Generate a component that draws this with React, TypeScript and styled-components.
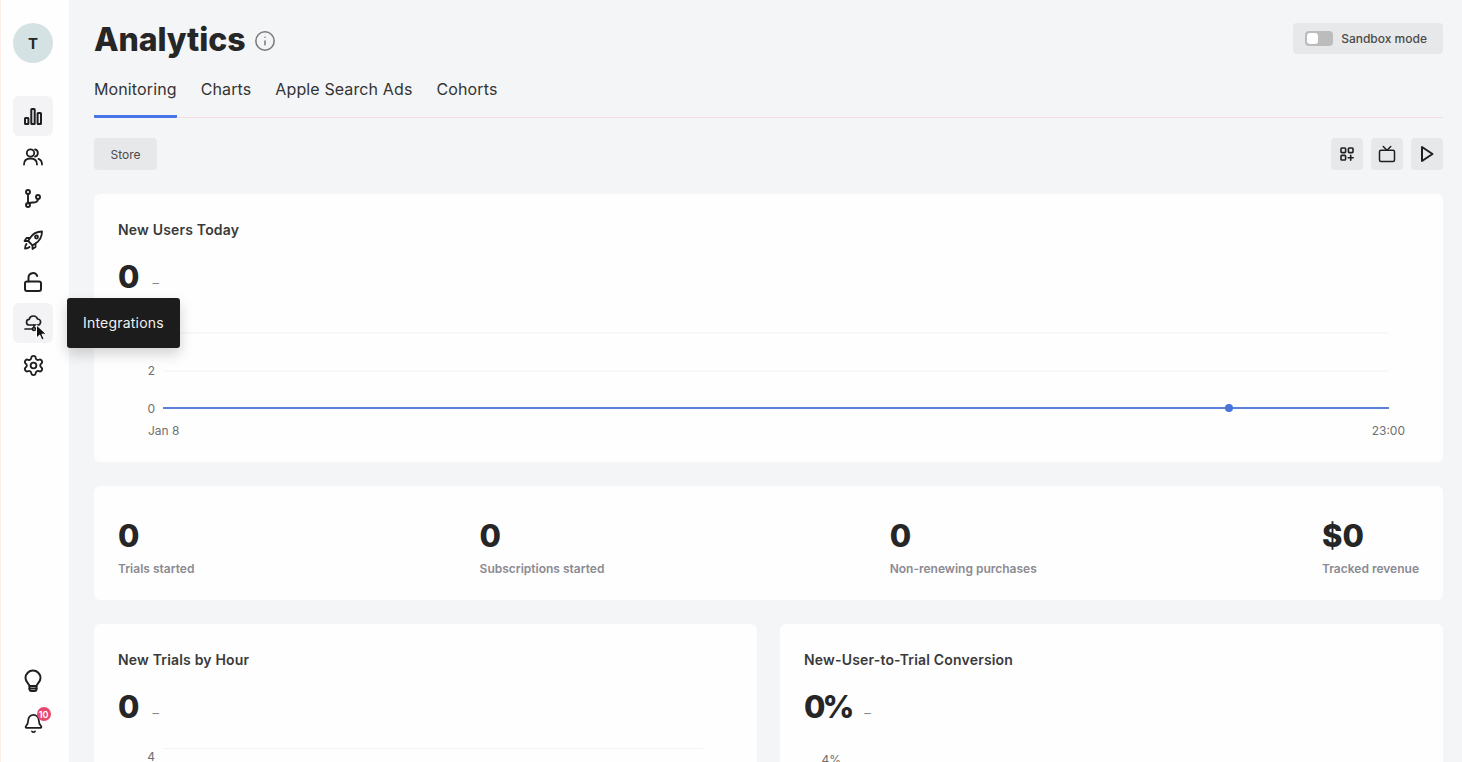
import React from 'react';
import styled, { createGlobalStyle } from 'styled-components';
import { Bell, Info, Settings, Tv } from 'lucide-react';

const BarsIcon = () => (
    <svg width="22" height="22" viewBox="0 0 22 22" fill="none" stroke="#1f1f1f" strokeWidth="2" strokeLinejoin="round">
        <rect x="3" y="13" width="3.4" height="6" rx="0.5" />
        <rect x="9.300" y="4" width="3.400" height="15" rx="0.5" />
        <rect x="15.600" y="8" width="3.400" height="11" rx="0.5" />
    </svg>
);

const UsersIcon = () => (
    <svg width="22" height="22" viewBox="0 0 22 22" fill="none" stroke="#1f1f1f" strokeWidth="1.8" strokeLinecap="round">
        <circle cx="8.500" cy="7" r="3.700" />
        <path d="M2 18.500c0-4 2.800-6 6.500-6s6.500 2 6.500 6" />
        <path d="M13 3.400a3.700 3.700 0 0 1 0 7.200" />
        <path d="M16.500 12.900c2.200.8 3.500 2.800 3.500 5.600" />
    </svg>
);

const BranchIcon = () => (
    <svg width="22" height="22" viewBox="0 0 22 22" fill="none" stroke="#1f1f1f" strokeWidth="1.9" strokeLinecap="round">
        <circle cx="6" cy="4" r="2" />
        <circle cx="6" cy="17" r="2" />
        <circle cx="16" cy="9" r="2" />
        <path d="M6 6v9" />
        <path d="M16 11c0 2.500-2 3.500-5 3.500-2.500 0-4 .5-5 1" />
    </svg>
);

const RocketIcon = () => (
    <svg width="22" height="22" viewBox="0 0 22 22" fill="none" stroke="#1f1f1f" strokeWidth="1.8" strokeLinecap="round" strokeLinejoin="round">
        <path d="M20 2.500C14.500 2.500 10.500 5 8 9l-1.800 3 4.300 4.300 3-1.800c3.800-2.500 6.500-6.500 6.500-12z" />
        <path d="M8 9H4.500l-2 3h3.700" />
        <path d="M13.500 14.500V18l-3 2v-3.700" />
        <circle cx="14.500" cy="8" r="1.500" />
        <path d="M4.500 15c-1 1-1.500 3-1.500 4.500 1.500 0 3.500-.5 4.500-1.500" />
    </svg>
);

const LockIcon = () => (
    <svg width="22" height="22" viewBox="0 0 22 22" fill="none" stroke="#1f1f1f" strokeWidth="2" strokeLinecap="round" strokeLinejoin="round">
        <rect x="3" y="10.500" width="16" height="9.500" rx="2" />
        <path d="M6.500 10.500V6.500a4.500 4.500 0 0 1 8.700-1.500" />
    </svg>
);

const CloudNodeIcon = () => (
    <svg width="22" height="22" viewBox="0 0 22 22" fill="none" stroke="#1f1f1f" strokeWidth="1.7" strokeLinecap="round" strokeLinejoin="round">
        <path d="M7.500 13a2.800 2.800 0 0 1-.3-5.600A4.300 4.300 0 0 1 15.500 7a3 3 0 0 1 .2 6z" />
        <path d="M12 13v2.500" />
        <circle cx="12" cy="17" r="1.500" />
        <path d="M3 17h7.500" />
    </svg>
);

const BulbIcon = () => (
    <svg width="24" height="24" viewBox="0 0 24 24" fill="none" stroke="#1f1f1f" strokeWidth="2" strokeLinecap="round" strokeLinejoin="round">
        <path d="M8.500 17C8.500 15 4.500 13.500 4.500 9a7.500 7.500 0 0 1 15 0c0 4.500-4 6-4 8z" />
        <path d="M8.500 17v3a2 2 0 0 0 2 2h3a2 2 0 0 0 2-2v-3" />
        <path d="M8.500 19.500h7" />
    </svg>
);

const GridPlusIcon = () => (
    <svg width="16" height="16" viewBox="0 0 16 16" fill="none" stroke="#1f1f1f" strokeWidth="1.6" strokeLinecap="round">
        <rect x="2" y="2" width="4.600" height="4.600" rx="0.8" />
        <rect x="9.400" y="2" width="4.600" height="4.600" rx="0.8" />
        <rect x="2" y="9.400" width="4.600" height="4.600" rx="0.8" />
        <path d="M11.700 9.200v5M9.200 11.700h5" />
    </svg>
);

const PlayIcon = () => (
    <svg width="18" height="18" viewBox="0 0 18 18" fill="none" stroke="#1f1f1f" strokeWidth="2" strokeLinejoin="round">
        <path d="M4 2l10.500 7L4 16z" />
    </svg>
);

const CursorIcon = () => (
    <svg width="14" height="18" viewBox="0 0 14 18">
        <path d="M1.500 1v13l3.200-3 2.200 5 2.200-1-2.200-4.800h4.400z" fill="#111" stroke="#fff" strokeWidth="1" />
    </svg>
);

const navItems = [
    { icon: <BarsIcon />, key: 'analytics', active: true },
    { icon: <UsersIcon />, key: 'users' },
    { icon: <BranchIcon />, key: 'flows' },
    { icon: <RocketIcon />, key: 'launch' },
    { icon: <LockIcon />, key: 'access' },
    { icon: <CloudNodeIcon />, key: 'integrations', active: true, tooltip: 'Integrations' },
    { icon: <Settings size={23} color="#1f1f1f" strokeWidth={1.9} />, key: 'settings' },
];

const tabs = ['Monitoring', 'Charts', 'Apple Search Ads', 'Cohorts'];

const stats = [
    { value: '0', label: 'Trials started' },
    { value: '0', label: 'Subscriptions started' },
    { value: '0', label: 'Non-renewing purchases' },
    { value: '$0', label: 'Tracked revenue' },
];

const UsersChart = () => (
    <ChartSvg width="1301" height="132" viewBox="0 0 1301 132">
        <line x1="45" y1="15" x2="1271" y2="15" stroke="#f1f2f5" />
        <line x1="45" y1="53" x2="1271" y2="53" stroke="#f1f2f5" />
        <ChartLabel x="37" y="57" textAnchor="end">2</ChartLabel>
        <ChartLabel x="37" y="94.500" textAnchor="end">0</ChartLabel>
        <line x1="45" y1="90" x2="1271" y2="90" stroke="#5b80d8" strokeWidth="2" />
        <circle cx="1111" cy="90" r="4" fill="#4775d9" />
        <ChartLabel x="30" y="116.500">Jan 8</ChartLabel>
        <ChartLabel x="1287" y="116.500" textAnchor="end">23:00</ChartLabel>
    </ChartSvg>
);

const App: React.FC = () => {
    return (
        <Page>
            <GlobalStyle />
            <Sidebar>
                <Avatar>T</Avatar>
                <Nav>
                    {navItems.map((item) => (
                        <NavItem key={item.key} $active={item.active}>
                            {item.icon}
                            {item.tooltip && (
                                <>
                                    <Cursor><CursorIcon /></Cursor>
                                    <Tooltip>{item.tooltip}</Tooltip>
                                </>
                            )}
                        </NavItem>
                    ))}
                </Nav>
                <SidebarBottom>
                    <BulbIcon />
                    <BellWrap>
                        <Bell size={21} color="#1f1f1f" />
                        <BellBadge>10</BellBadge>
                    </BellWrap>
                </SidebarBottom>
            </Sidebar>
            <Main>
                <Header>
                    <TitleRow>
                        <Title>Analytics</Title>
                        <InfoIcon size={22} color="#7b7b7b" strokeWidth={1.7} />
                    </TitleRow>
                    <SandboxButton>
                        <Toggle><ToggleKnob /></Toggle>
                        Sandbox mode
                    </SandboxButton>
                </Header>
                <TabBar>
                    {tabs.map((tab, index) => (
                        <Tab key={tab} $active={index === 0}>{tab}</Tab>
                    ))}
                </TabBar>
                <Toolbar>
                    <StoreButton>Store</StoreButton>
                    <ToolButtons>
                        <IconButton><GridPlusIcon /></IconButton>
                        <IconButton><Tv size={18} color="#1f1f1f" /></IconButton>
                        <IconButton><PlayIcon /></IconButton>
                    </ToolButtons>
                </Toolbar>
                <Card>
                    <CardTitle>New Users Today</CardTitle>
                    <ValueRow>
                        <BigValue>0</BigValue>
                        <Dash>–</Dash>
                    </ValueRow>
                    <UsersChart />
                </Card>
                <StatsCard>
                    {stats.map((stat) => (
                        <Stat key={stat.label}>
                            <BigValue>{stat.value}</BigValue>
                            <StatLabel>{stat.label}</StatLabel>
                        </Stat>
                    ))}
                </StatsCard>
                <TwoColumns>
                    <Card>
                        <CardTitle>New Trials by Hour</CardTitle>
                        <ValueRow>
                            <BigValue>0</BigValue>
                            <Dash>–</Dash>
                        </ValueRow>
                        <PartialAxis>
                            <AxisLabel>4</AxisLabel>
                            <AxisLine />
                        </PartialAxis>
                    </Card>
                    <Card>
                        <CardTitle>New-User-to-Trial Conversion</CardTitle>
                        <ValueRow>
                            <BigValue $tight>0%</BigValue>
                            <Dash>–</Dash>
                        </ValueRow>
                        <PartialAxis>
                            <AxisLabel $lower>4%</AxisLabel>
                        </PartialAxis>
                    </Card>
                </TwoColumns>
            </Main>
        </Page>
    );
};

export default App;

const GlobalStyle = createGlobalStyle`
    html, body {
        margin: 0;
        height: 100%;
        overflow: hidden;
    }
    body {
        font-family: Inter, "Liberation Sans", sans-serif;
        color: #262626;
    }
    * {
        box-sizing: border-box;
    }
`;

const Page = styled.div`
    display: flex;
    width: 1462px;
    height: 762px;
    overflow: hidden;
    background-color: #f4f5f6;
`;

const Sidebar = styled.aside`
    position: relative;
    z-index: 2;
    flex: 0 0 69px;
    display: flex;
    flex-direction: column;
    align-items: center;
    height: 762px;
    padding: 23px 3px 28px 0;
    background-color: #fefefe;
    box-shadow: inset 1px 0 0 #fdeee8;
`;

const Avatar = styled.div`
    flex: 0 0 40px;
    display: flex;
    align-items: center;
    justify-content: center;
    width: 40px;
    border-radius: 50%;
    background-color: #d5e2e4;
    font-size: 15px;
    font-weight: 700;
    color: #262626;
`;

const Nav = styled.nav`
    display: flex;
    flex-direction: column;
    gap: 1.6px;
    margin-top: 32.5px;
`;

const NavItem = styled.div<{ $active?: boolean }>`
    position: relative;
    display: flex;
    align-items: center;
    justify-content: center;
    width: 40px;
    height: 40px;
    border-radius: 6px;
    background-color: ${(props) => (props.$active ? '#f3f2f5' : 'transparent')};
`;

const Cursor = styled.span`
    position: absolute;
    left: 22px;
    top: 21px;
    display: flex;
`;

const Tooltip = styled.div`
    position: absolute;
    left: 54px;
    top: -5px;
    display: flex;
    align-items: center;
    width: 113px;
    height: 50px;
    padding: 0 0 2px 16px;
    border-radius: 3px;
    background-color: #1c1c1c;
    box-shadow: 0 6px 14px rgba(0, 0, 0, 0.18);
    color: #f1f1f1;
    font-size: 14px;
    font-weight: 400;
    letter-spacing: 0.2px;
    white-space: nowrap;
`;

const SidebarBottom = styled.div`
    display: flex;
    flex-direction: column;
    align-items: center;
    gap: 20px;
    margin-top: auto;
`;

const BellWrap = styled.div`
    position: relative;
    display: flex;
`;

const BellBadge = styled.span`
    position: absolute;
    left: 14px;
    top: -6px;
    display: flex;
    align-items: center;
    justify-content: center;
    width: 14px;
    height: 14px;
    border-radius: 50%;
    background-color: #e8476f;
    color: #fff;
    font-size: 9px;
    font-weight: 600;
`;

const Main = styled.main`
    flex: 1;
    min-width: 0;
    padding: 19px 19px 0 25px;
`;

const Header = styled.header`
    display: flex;
    align-items: flex-start;
    justify-content: space-between;
    height: 48px;
`;

const TitleRow = styled.div`
    display: flex;
    align-items: center;
    gap: 9px;
    margin-top: 1px;
`;

const InfoIcon = styled(Info)`
    margin-top: 2px;
`;

const Title = styled.h1`
    margin: 0;
    font-size: 32px;
    line-height: 40px;
    font-weight: 800;
    letter-spacing: -0.1px;
    color: #262626;
`;

const SandboxButton = styled.div`
    display: flex;
    align-items: center;
    gap: 8px;
    height: 31px;
    margin-top: 4px;
    padding: 0 16px 0 12px;
    border-radius: 4px;
    background-color: #e7e8e9;
    color: #4a4a4a;
    font-size: 12px;
    font-weight: 500;
`;

const Toggle = styled.span`
    display: flex;
    align-items: center;
    width: 28px;
    height: 15px;
    padding: 0 2px;
    border-radius: 4px;
    background-color: #bcbcbc;
`;

const ToggleKnob = styled.span`
    width: 11px;
    height: 11px;
    border-radius: 3px;
    background-color: #fff;
`;

const TabBar = styled.div`
    display: flex;
    gap: 24px;
    height: 51px;
    border-bottom: 1px solid #f5dbe2;
`;

const Tab = styled.div<{ $active?: boolean }>`
    height: 51px;
    padding-top: 11px;
    font-size: 16px;
    line-height: 22px;
    font-weight: 400;
    letter-spacing: 0.12px;
    color: #333;
    border-bottom: ${(props) => (props.$active ? '3px solid #4775e6' : 'none')};
    border-radius: 1px;
`;

const Toolbar = styled.div`
    display: flex;
    align-items: center;
    justify-content: space-between;
    margin-top: 20px;
    margin-bottom: 24px;
`;

const StoreButton = styled.div`
    display: flex;
    align-items: center;
    justify-content: center;
    width: 63px;
    height: 32px;
    border-radius: 4px;
    background-color: #e7e8e9;
    color: #4a4a4a;
    font-size: 12px;
`;

const ToolButtons = styled.div`
    display: flex;
    gap: 8px;
`;

const IconButton = styled.div`
    display: flex;
    align-items: center;
    justify-content: center;
    width: 32px;
    height: 32px;
    border-radius: 4px;
    background-color: #e7e8e9;
`;

const Card = styled.section`
    flex: 1;
    min-width: 0;
    padding: 27px 24px 12px;
    border-radius: 6px;
    background-color: #fefefe;
`;

const CardTitle = styled.h3`
    margin: 0;
    font-size: 14px;
    line-height: 18px;
    font-weight: 600;
    letter-spacing: 0.18px;
    color: #3a3a3a;
`;

const ValueRow = styled.div`
    display: flex;
    align-items: baseline;
    gap: 13px;
    margin-top: 18px;
`;

const BigValue = styled.div<{ $tight?: boolean }>`
    font-size: 31px;
    line-height: 40px;
    font-weight: 800;
    letter-spacing: ${(props) => (props.$tight ? '-3px' : '0')};
    color: #262626;
`;

const Dash = styled.span`
    color: #8a8a8a;
    font-size: 13px;
`;

const ChartSvg = styled.svg`
    display: block;
    margin-top: 21px;
`;

const ChartLabel = styled.text`
    font-family: Inter, "Liberation Sans", sans-serif;
    font-size: 12px;
    fill: #6f6f6f;
`;

const StatsCard = styled.section`
    display: flex;
    justify-content: space-between;
    height: 114px;
    margin-top: 24px;
    padding: 30px 24px 0;
    border-radius: 6px;
    background-color: #fefefe;
`;

const Stat = styled.div`
    display: flex;
    flex-direction: column;
`;

const StatLabel = styled.div`
    margin-top: 5px;
    font-size: 12px;
    line-height: 16px;
    font-weight: 600;
    color: #8a8a92;
`;

const TwoColumns = styled.div`
    display: flex;
    gap: 23px;
    margin-top: 24px;
`;

const PartialAxis = styled.div`
    display: flex;
    align-items: flex-start;
    height: 80px;
    margin-top: 21px;
    padding-right: 30px;
`;

const AxisLabel = styled.span<{ $lower?: boolean }>`
    width: 37px;
    margin-top: ${(props) => (props.$lower ? '4px' : '1px')};
    text-align: right;
    font-size: 12px;
    line-height: 15px;
    color: #6f6f6f;
`;

const AxisLine = styled.div`
    flex: 1;
    height: 1px;
    margin-left: 8px;
    background-color: #f1f2f5;
`;
